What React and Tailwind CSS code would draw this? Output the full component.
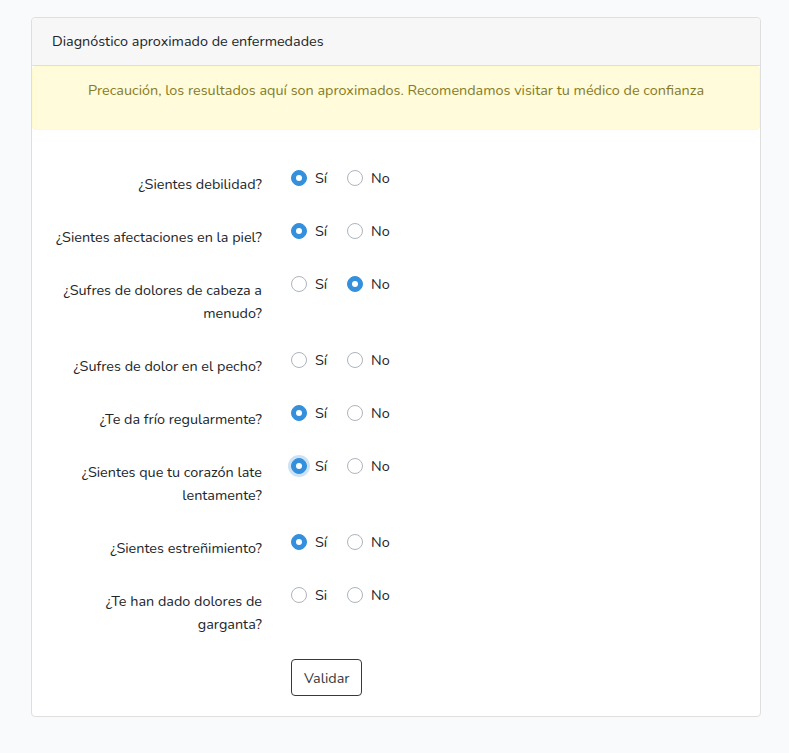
const QUESTIONS = [
  { label: '¿Sientes debilidad?', checked: 'si' },
  { label: '¿Sientes afectaciones en la piel?', checked: 'si' },
  { label: '¿Sufres de dolores de cabeza a menudo?', checked: 'no' },
  { label: '¿Sufres de dolor en el pecho?', checked: null },
  { label: '¿Te da frío regularmente?', checked: 'si' },
  { label: '¿Sientes que tu corazón late lentamente?', checked: 'si', focus: true },
  { label: '¿Sientes estreñimiento?', checked: 'si' },
  { label: '¿Te han dado dolores de garganta?', checked: null, yes: 'Si' },
]

function Radio({ checked, focus }) {
  if (checked) {
    return (
      <span
        className={`w-4 h-4 rounded-full bg-[#3490dc] border border-[#3490dc] flex items-center justify-center shrink-0 ${
          focus ? 'shadow-[0_0_0_3px_rgba(52,144,220,0.25)]' : ''
        }`}
      >
        <span className="w-[6px] h-[6px] rounded-full bg-white" />
      </span>
    )
  }
  return <span className="w-4 h-4 rounded-full bg-white border border-[#adb5bd] shrink-0" />
}

export default function App() {
  return (
    <div className="min-h-[753px] bg-[#f8fafc] font-['Nunito','Lato',sans-serif] text-[14.4px] text-[#212529] pt-[17px] px-[31px] pb-[36px]">
      <div className="w-[730px] bg-white border border-[#dfdfdf] rounded">
        {/* header */}
        <div className="h-[48px] flex items-center px-5 bg-[#f7f7f7] border-b border-[#dfdfdf] rounded-t">
          Diagnóstico aproximado de enfermedades
        </div>

        {/* warning */}
        <div className="bg-[#fffbdb] border border-[#fffacc] rounded text-[#857b26] text-center px-5 pt-[11px] pb-[11px] mb-4">
          <p className="leading-[24px] mb-4">
            Precaución, los resultados aquí son aproximados. Recomendamos visitar tu médico de confianza
          </p>
        </div>

        {/* form */}
        <div className="px-5 pt-5 pb-5">
          {QUESTIONS.map((q, i) => (
            <div key={i} className="flex mb-4">
              <div className="w-[240px] px-[15px] -ml-[15px] py-[7px] leading-[23px] text-right shrink-0">
                {q.label}
              </div>
              <div className="pl-[14px] flex items-center h-[24px] leading-[24px]">
                <div className="w-[56px] flex items-center gap-2">
                  <Radio checked={q.checked === 'si'} focus={q.focus} />
                  <span>{q.yes ?? 'Sí'}</span>
                </div>
                <div className="flex items-center gap-2">
                  <Radio checked={q.checked === 'no'} />
                  <span>No</span>
                </div>
              </div>
            </div>
          ))}
          <div className="flex mt-px">
            <div className="w-[225px] shrink-0" />
            <div className="pl-[14px]">
              <button className="h-[37px] px-3 border border-[#343a40] rounded text-[#343a40] bg-white leading-[22px]">
                Validar
              </button>
            </div>
          </div>
        </div>
      </div>
    </div>
  )
}
